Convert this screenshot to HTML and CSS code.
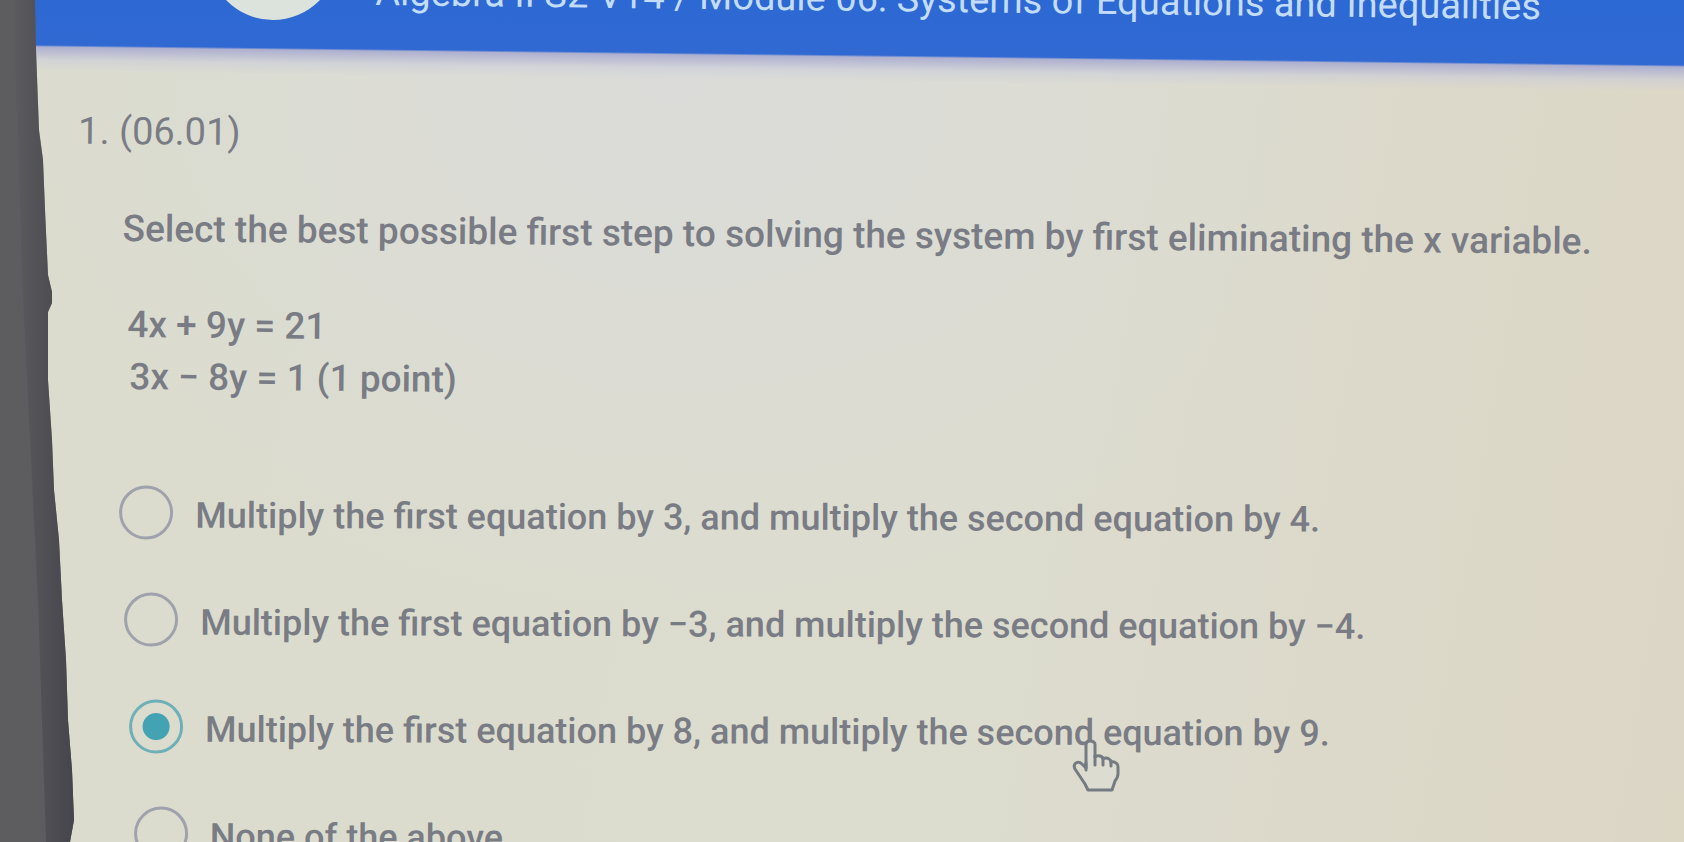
FILE: index.html
```
<!DOCTYPE html>
<html lang="en">
<head>
    <meta charset="UTF-8">
    <meta name="viewport" content="width=device-width, initial-scale=1.0">
    <title>Algebra II S2 V14</title>
    <link rel="stylesheet" href="styles.css">
</head>
<body>
    <header class="topbar">
        <div class="avatar"></div>
        <div class="course">Algebra II S2 V14 / Module 06: Systems of Equations and Inequalities</div>
    </header>

    <main class="question">
        <h1 class="number">1. (06.01)</h1>
        <p class="prompt">Select the best possible first step to solving the system by first eliminating the x variable.</p>
        <div class="equations">
            <p>4x + 9y = 21</p>
            <p>3x − 8y = 1 (1 point)</p>
        </div>

        <form class="options">
            <div class="option">
                <input type="radio" name="answer" id="answer1">
                <label for="answer1">Multiply the first equation by 3, and multiply the second equation by 4.</label>
            </div>
            <div class="option">
                <input type="radio" name="answer" id="answer2">
                <label for="answer2">Multiply the first equation by −3, and multiply the second equation by −4.</label>
            </div>
            <div class="option">
                <input type="radio" name="answer" id="answer3" checked>
                <label for="answer3">Multiply the first equation by 8, and multiply the second equation by 9.</label>
            </div>
            <div class="option">
                <input type="radio" name="answer" id="answer4">
                <label for="answer4">None of the above</label>
            </div>
        </form>
    </main>

    <!-- screen frame -->
    <svg class="frame" viewBox="0 0 80 842" preserveAspectRatio="none">
        <defs>
            <linearGradient id="frameShade" x1="0" y1="0" x2="1" y2="0">
                <stop offset="0" stop-color="#45454c" stop-opacity="0"/>
                <stop offset="0.35" stop-color="#45454c" stop-opacity="0.4"/>
                <stop offset="1" stop-color="#45454c"/>
            </linearGradient>
        </defs>
        <path fill="#5d5d60" d="M0 0H35L36 50L39 130L43 160L45 210L48 275L52 292L52 303L48 312L48 380L52 440L54 490L59 540L62 600L66 660L68 720L72 770L74 820L70 842H0Z"/>
        <path fill="url(#frameShade)" d="M12 0H35L36 50L39 130L43 160L45 210L48 275L52 292L52 303L48 312L48 380L52 440L54 490L59 540L62 600L66 660L68 720L72 770L74 820L70 842H46L38 600L28 400L22 280L18 140Z"/>
    </svg>

    <!-- hand pointer -->
    <svg class="pointer" viewBox="0 0 48 54">
        <path d="M14 25V6Q14 2 18 2Q23 2 23 6V18Q25 16 28 17Q31 18 31 20Q34 18 37 20Q39 21 39 23Q42 22 44 24Q46 25 46 28V35Q46 38 43 42L40 51H16L13 45L3 30Q1 26 4 24Q7 22 10 25L14 29Z"/>
        <path d="M14 24V31M23 17V26M31 19V26M39 22V27"/>
    </svg>
</body>
</html>
```

FILE: styles.css
```
html {
    overflow: hidden;
}

body {
    position: relative;
    display: flow-root;
    height: 100vh;
    margin: 0;
    overflow: hidden;
    font-family: Roboto, "Liberation Sans", sans-serif;
    font-size: 36px;
    font-weight: 500;
    line-height: 52px;
    color: #7a7c85;
    background: radial-gradient(ellipse at 40% 10%, #dbdcd9, rgba(219, 220, 217, 0) 50%),
        linear-gradient(100deg, #dbdccd, #dcdccf 60%, #dcd6c5);
}

/* bar is scrolled partly out of view */
.topbar {
    display: flex;
    align-items: flex-start;
    gap: 37px;
    height: 190px;
    margin-top: -100px;
    padding-left: 208px;
    box-sizing: border-box;
    font-size: 38px;
    font-weight: 400;
    color: #c3dcf8;
    background: linear-gradient(180.7deg, #2468d6, #3169d2 165px, #aeb0d0 167px, rgba(200, 202, 218, 0.5) 180px, rgba(218, 219, 217, 0) 192px);
}

.avatar {
    flex: none;
    width: 130px;
    height: 130px;
    margin-top: -10px;
    border-radius: 50%;
    background: #dbe3dc;
}

.course {
    margin-top: 66px;
    white-space: nowrap;
    transform: rotate(0.7deg);
    transform-origin: left bottom;
}

/* the left edge of the page leans along the frame */
.question::before {
    content: "";
    float: left;
    width: 80px;
    height: 100vh;
    shape-outside: polygon(0 0, 37px 0, 75px 842px, 0 842px);
}

.number,
.prompt,
.equations {
    margin: 0;
    white-space: nowrap;
    transform-origin: left bottom;
}

.number {
    padding-top: 14px;
    font-size: 38px;
    font-weight: 400;
    text-indent: 38px;
    transform: rotate(0.5deg);
}

.prompt {
    padding-top: 46px;
    font-size: 37px;
    text-indent: 78px;
    transform: rotate(0.5deg);
}

.equations {
    padding-top: 44px;
    font-size: 37px;
    text-indent: 78px;
    transform: rotate(0.5deg);
}

.equations p {
    margin: 0;
}

.options {
    padding-top: 83px;
}

.option {
    padding-bottom: 51px;
    white-space: nowrap;
    text-indent: 62px;
    transform: rotate(0.2deg);
    transform-origin: left center;
}

.option input {
    appearance: none;
    box-sizing: border-box;
    width: 54px;
    height: 54px;
    margin: 0 13px 0 0;
    vertical-align: -12px;
    border: 3px solid #9fa1ad;
    border-radius: 50%;
}

.option input:checked {
    border-color: #6fb0b8;
    background: radial-gradient(circle, #43a3b3 13px, transparent 14px);
}

.frame {
    position: absolute;
    top: 0;
    left: 0;
    width: 80px;
    height: 100%;
}

.pointer {
    position: absolute;
    top: 739px;
    left: 1072px;
    width: 48px;
    height: 54px;
    fill: #dcddd0;
    stroke: #757b82;
    stroke-width: 3;
    stroke-linejoin: round;
    stroke-linecap: round;
}
```
